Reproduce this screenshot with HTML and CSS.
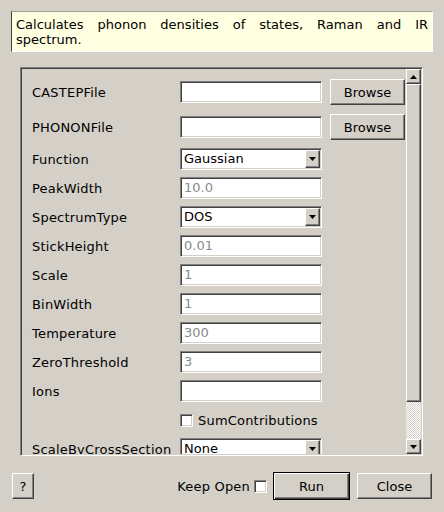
FILE: index.html
```html
<!DOCTYPE html>
<html>
<head>
<meta charset="utf-8">
<title>Dialog</title>
<link rel="stylesheet" href="styles.css">
</head>
<body>
<div class="dialog">
  <div class="tip">Calculates phonon densities of states, Raman and IR spectrum.</div>
  <div class="frame">
    <div class="content">
      <div class="row tall"><span class="lbl">CASTEPFile</span><span class="field"></span><span class="btn">Browse</span></div>
      <div class="row tall"><span class="lbl">PHONONFile</span><span class="field"></span><span class="btn">Browse</span></div>
      <div class="row"><span class="lbl">Function</span><span class="field select"><span class="val">Gaussian</span><span class="dd"><svg width="7" height="4" viewBox="0 0 7 4"><polygon points="0,0 7,0 3.5,4" fill="#000"/></svg></span></span></div>
      <div class="row"><span class="lbl">PeakWidth</span><span class="field dim">10.0</span></div>
      <div class="row"><span class="lbl">SpectrumType</span><span class="field select"><span class="val">DOS</span><span class="dd"><svg width="7" height="4" viewBox="0 0 7 4"><polygon points="0,0 7,0 3.5,4" fill="#000"/></svg></span></span></div>
      <div class="row"><span class="lbl">StickHeight</span><span class="field dim">0.01</span></div>
      <div class="row"><span class="lbl">Scale</span><span class="field dim">1</span></div>
      <div class="row"><span class="lbl">BinWidth</span><span class="field dim">1</span></div>
      <div class="row"><span class="lbl">Temperature</span><span class="field dim">300</span></div>
      <div class="row"><span class="lbl">ZeroThreshold</span><span class="field dim">3</span></div>
      <div class="row"><span class="lbl">Ions</span><span class="field"></span></div>
      <div class="row"><span class="lbl"></span><span class="checkline"><span class="check"></span>SumContributions</span></div>
      <div class="row"><span class="lbl">ScaleByCrossSection</span><span class="field select"><span class="val">None</span><span class="dd"><svg width="7" height="4" viewBox="0 0 7 4"><polygon points="0,0 7,0 3.5,4" fill="#000"/></svg></span></span></div>
    </div>
    <div class="sbar">
      <div class="sbtn"><svg width="7" height="4" viewBox="0 0 7 4"><polygon points="0,4 7,4 3.5,0" fill="#000"/></svg></div>
      <div class="thumb"></div>
      <div class="trough"></div>
      <div class="sbtn"><svg width="7" height="4" viewBox="0 0 7 4"><polygon points="0,0 7,0 3.5,4" fill="#000"/></svg></div>
    </div>
  </div>
  <div class="footer">
    <span class="btn help">?</span>
    <span class="keep">Keep Open<span class="check"></span></span>
    <span class="btn run">Run</span>
    <span class="btn close">Close</span>
  </div>
</div>
</body>
</html>
```
FILE: styles.css
```css
* { box-sizing: border-box; }
html, body { margin: 0; padding: 0; }
body {
  background: #d4d0c8;
  font-family: "DejaVu Sans", "Liberation Sans", sans-serif;
  font-size: 13px;
  letter-spacing: 0.2px;
  color: #000;
  width: 444px;
  height: 512px;
  overflow: hidden;
}
.dialog {
  padding: 11px;
  display: flex;
  flex-direction: column;
}
.tip {
  width: 422px;
  height: 41px;
  background: #ffffe1;
  border: 1px solid;
  border-color: #a0a0a0 #fff #fff #404040;
  padding: 5px 4px 3px 4px;
  line-height: 15px;
  text-align: justify;
  letter-spacing: 0;
}
.frame {
  margin: 15px 0 0 9px;
  width: 403px;
  height: 389px;
  display: flex;
  border: 1px solid;
  border-color: #808080 #fff #fff #808080;
  box-shadow: inset 1px 1px #404040, inset -1px -1px #d4d0c8;
  padding: 1px;
}
.content {
  width: 384px;
  height: 100%;
  overflow: hidden;
  padding: 9px 0 0 10px;
  display: flex;
  flex-direction: column;
  gap: 7px;
}
.row {
  display: grid;
  grid-template-columns: 140px 142px 75px;
  column-gap: 8px;
  align-items: center;
  height: 22px;
  flex: none;
}
.row.tall { height: 28px; }
.lbl { white-space: nowrap; }
.field {
  height: 22px;
  background: #fff;
  border: 1px solid;
  border-color: #808080 #fff #fff #808080;
  box-shadow: inset 1px 1px #404040, inset -1px -1px #d4d0c8;
  padding-left: 3px;
  line-height: 20px;
  white-space: nowrap;
  letter-spacing: 0;
}
.field.dim { color: #8a8a8a; }
.select {
  display: flex;
  align-items: stretch;
  padding: 1px 1px 1px 3px;
  line-height: 18px;
}
.select .val { flex: 1; }
.dd {
  width: 15px;
  height: 18px;
  background: #d4d0c8;
  border: 1px solid;
  border-color: #fff #404040 #404040 #fff;
  box-shadow: inset -1px -1px #808080;
  display: flex;
  align-items: center;
  justify-content: center;
}
.btn {
  background: #d4d0c8;
  border: 1px solid;
  border-color: #fff #404040 #404040 #fff;
  box-shadow: inset -1px -1px #808080;
  height: 26px;
  display: flex;
  align-items: center;
  justify-content: center;
  letter-spacing: 0;
}
.checkline {
  grid-column: 2 / 4;
  display: flex;
  align-items: center;
  gap: 5px;
}
.check {
  width: 13px;
  height: 13px;
  background: #fff;
  border: 1px solid;
  border-color: #808080 #fff #fff #808080;
  box-shadow: inset 1px 1px #404040, inset -1px -1px #d4d0c8;
  flex: none;
}
.sbar {
  width: 15px;
  height: 100%;
  display: flex;
  flex-direction: column;
}
.sbtn {
  height: 15px;
  flex: none;
  background: #d4d0c8;
  border: 1px solid;
  border-color: #fff #404040 #404040 #fff;
  box-shadow: inset -1px -1px #808080;
  display: flex;
  align-items: center;
  justify-content: center;
}
.thumb {
  height: 318px;
  flex: none;
  background: #d4d0c8;
  border: 1px solid;
  border-color: #fff #404040 #404040 #fff;
  box-shadow: inset -1px -1px #808080;
}
.trough {
  flex: 1;
  background-color: #d4d0c8;
  background-image: conic-gradient(#fff 25%, #d4d0c8 0 50%, #fff 0 75%, #d4d0c8 0);
  background-size: 2px 2px;
}
.footer {
  margin-top: 16px;
  height: 28px;
  display: flex;
  align-items: center;
  padding-left: 1px;
}
.help { width: 22px; }
.keep {
  margin-left: auto;
  margin-right: 6px;
  display: flex;
  align-items: center;
  gap: 4px;
}
.run {
  width: 77px;
  height: 28px;
  border: 1px solid #000;
  box-shadow: inset 1px 1px #fff, inset -1px -1px #404040, inset -2px -2px #808080;
}
.close {
  width: 75px;
  margin-left: 7px;
  margin-right: 1px;
}
```
